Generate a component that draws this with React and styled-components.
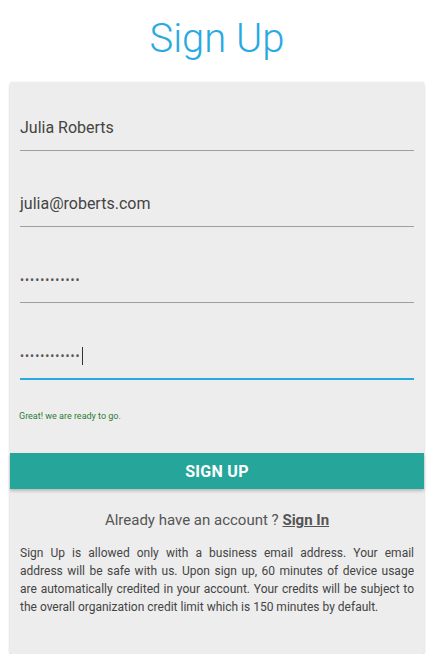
import React from "react";
import styled, {createGlobalStyle} from "styled-components";

const GlobalStyle = createGlobalStyle`
  html, body {
    margin: 0;
    padding: 0;
    background: #ffffff;
    font-family: Roboto, "Liberation Sans", sans-serif;
  }
`;

const Page = styled.div`
  width: 434px;
  padding: 15px 10px 0;
  box-sizing: border-box;
`;

const Title = styled.h1`
  margin: 0 0 19px;
  font-size: 40px;
  line-height: 48px;
  font-weight: 300;
  color: #29a9e1;
  text-align: center;
`;

const Card = styled.div`
  background: #ededed;
  border-radius: 2px;
  box-shadow: 0 2px 3px rgba(0, 0, 0, 0.18), 0 0 2px rgba(0, 0, 0, 0.08);
  padding: 23px 0 38px;
`;

const Fields = styled.div`
  display: flex;
  flex-direction: column;
  gap: 30px;
  padding: 0 10px;
`;

const Field = styled.div`
  height: 45px;
  display: flex;
  align-items: center;
  font-size: 16px;
  color: #444444;
  border-bottom: 1px solid ${(p) => (p.focused ? "#29a9e1" : "#9e9e9e")};
  box-shadow: ${(p) => (p.focused ? "0 1px 0 0 #29a9e1" : "none")};
`;

const Dots = styled.span`
  font-size: 12px;
  letter-spacing: 1px;
  color: #555555;
`;

const Caret = styled.span`
  display: inline-block;
  width: 1px;
  height: 18px;
  margin-left: 1px;
  background: #333333;
`;

const Helper = styled.div`
  margin: 31px 0 0;
  padding: 0 9px;
  font-size: 9px;
  line-height: 12px;
  color: #2e7d32;
`;

const SubmitButton = styled.button`
  display: block;
  width: 100%;
  height: 36px;
  margin-top: 31px;
  border: none;
  background: #26a69a;
  color: #ffffff;
  font-family: Roboto, "Liberation Sans", sans-serif;
  font-size: 16px;
  font-weight: 700;
  letter-spacing: 0.3px;
  box-shadow: 0 2px 3px rgba(0, 0, 0, 0.22);
  cursor: pointer;
`;

const SignInLine = styled.p`
  margin: 21px 0 0;
  font-size: 15px;
  line-height: 20px;
  color: #555555;
  text-align: center;

  a {
    color: #555555;
    font-weight: 700;
    text-decoration: underline;
  }
`;

const Note = styled.p`
  margin: 14px 0 0;
  padding: 0 10px;
  font-size: 12px;
  line-height: 18px;
  color: #444444;
  text-align: justify;
`;

const App = () => {
  return (
    <Page>
      <GlobalStyle />
      <Title>Sign Up</Title>
      <Card>
        <Fields>
          <Field>Julia Roberts</Field>
          <Field>julia@roberts.com</Field>
          <Field>
            <Dots>••••••••••••</Dots>
          </Field>
          <Field focused>
            <Dots>••••••••••••</Dots>
            <Caret />
          </Field>
        </Fields>
        <Helper>Great! we are ready to go.</Helper>
        <SubmitButton>SIGN UP</SubmitButton>
        <SignInLine>
          Already have an account ? <a href="#signin">Sign In</a>
        </SignInLine>
        <Note>
          Sign Up is allowed only with a business email address. Your email
          address will be safe with us. Upon sign up, 60 minutes of device usage
          are automatically credited in your account. Your credits will be
          subject to the overall organization credit limit which is 150 minutes
          by default.
        </Note>
      </Card>
    </Page>
  );
};

export default App;
